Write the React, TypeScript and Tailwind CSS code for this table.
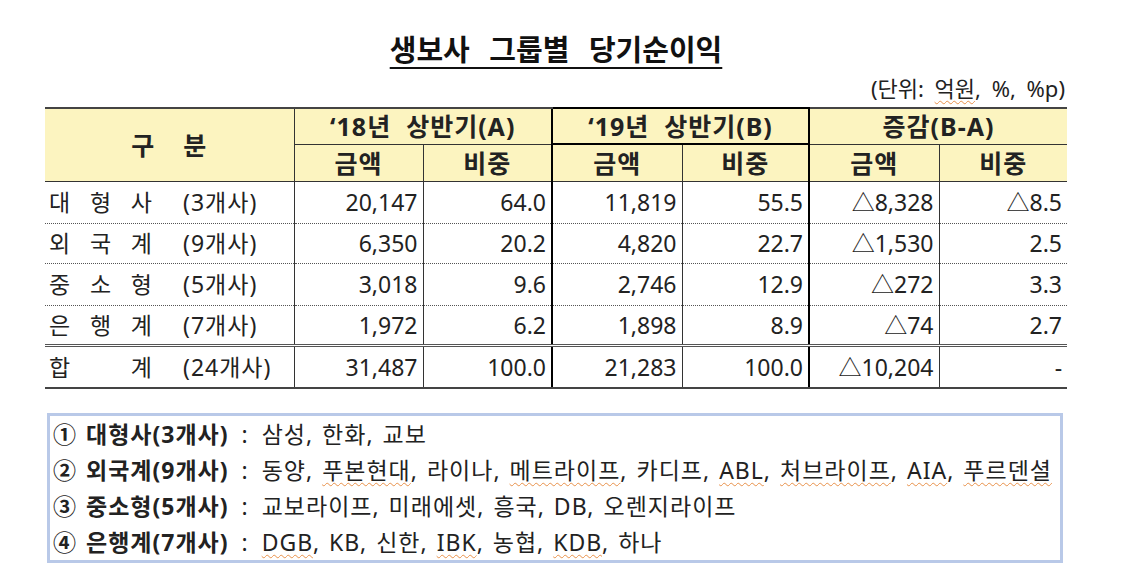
import React from "react";

type Row = {
  name: string[];
  count: string;
  a1: string;
  a2: string;
  b1: string;
  b2: string;
  d1: string;
  d2: string;
};

const rows: Row[] = [
  { name: ["대", "형", "사"], count: "(3개사)", a1: "20,147", a2: "64.0", b1: "11,819", b2: "55.5", d1: "△8,328", d2: "△8.5" },
  { name: ["외", "국", "계"], count: "(9개사)", a1: "6,350", a2: "20.2", b1: "4,820", b2: "22.7", d1: "△1,530", d2: "2.5" },
  { name: ["중", "소", "형"], count: "(5개사)", a1: "3,018", a2: "9.6", b1: "2,746", b2: "12.9", d1: "△272", d2: "3.3" },
  { name: ["은", "행", "계"], count: "(7개사)", a1: "1,972", a2: "6.2", b1: "1,898", b2: "8.9", d1: "△74", d2: "2.7" },
];

const total: Row = { name: ["합", "계"], count: "(24개사)", a1: "31,487", a2: "100.0", b1: "21,283", b2: "100.0", d1: "△10,204", d2: "-" };

const Sq = ({ children }: { children: React.ReactNode }) => (
  <span className="underline decoration-wavy decoration-[#e8914a] decoration-1 underline-offset-[3px]">
    {children}
  </span>
);

const notes: { label: string; items: React.ReactNode }[] = [
  { label: "① 대형사(3개사)", items: <>삼성, 한화, 교보</> },
  {
    label: "② 외국계(9개사)",
    items: (
      <>
        동양, <Sq>푸본현대</Sq>, 라이나, <Sq>메트라이프</Sq>, 카디프, <Sq>ABL</Sq>, <Sq>처브라이프</Sq>, <Sq>AIA</Sq>, <Sq>푸르덴셜</Sq>
      </>
    ),
  },
  { label: "③ 중소형(5개사)", items: <>교보라이프, 미래에셋, 흥국, DB, 오렌지라이프</> },
  {
    label: "④ 은행계(7개사)",
    items: (
      <>
        <Sq>DGB</Sq>, KB, 신한, <Sq>IBK</Sq>, 농협, <Sq>KDB</Sq>, 하나
      </>
    ),
  },
];

export default function App() {
  const font = "font-['Noto_Sans','Noto_Sans_CJK_KR',sans-serif]";
  const num = "text-right pr-[5px] py-0 text-[23px] text-[#222]";

  const bodyRow = (r: Row, i: number, isTotal: boolean) => {
    const rowBorder = isTotal
      ? "border-t-[3px] border-t-[#555] border-double border-b-2 border-b-[#444]"
      : "border-b border-dotted border-b-[#555]";
    const h = isTotal ? "h-[43px]" : i % 2 === 0 ? "h-[42px]" : "h-[40px]";
    return (
      <tr key={r.count} className={`${h} ${rowBorder}`}>
        <td className="pl-[4px] py-0 text-[23px] text-[#222]">
          <div className="flex items-center">
            <div className="flex w-[104px] justify-between tracking-[1px]">
              {r.name.map((c) => (
                <span key={c}>{c}</span>
              ))}
            </div>
            <span className="ml-[30px] tracking-[1px]">{r.count}</span>
          </div>
        </td>
        <td className={`${num} border-l border-l-[#333]`}>{r.a1}</td>
        <td className={`${num} border-l border-l-[#333]`}>{r.a2}</td>
        <td className={`${num} border-l-2 border-l-black ${isTotal ? "border-b-2 border-b-black" : ""}`}>{r.b1}</td>
        <td className={`${num} border-l border-l-[#333] border-r-2 border-r-black ${isTotal ? "border-b-2 border-b-black" : ""}`}>{r.b2}</td>
        <td className={`${num} border-l border-l-[#333]`}>{r.d1}</td>
        <td className={`${num} border-l border-l-[#333]`}>{r.d2}</td>
      </tr>
    );
  };

  const hd = "bg-[#fcf4c0] text-center py-0 font-bold text-[25px] tracking-[1px] text-[#222]";

  return (
    <div className={`w-[1131px] h-[573px] overflow-hidden bg-white ${font}`}>
      <div className="pl-[45px] w-[1067px]">
        <div className="mt-[30px] h-[40px] text-center leading-[40px]">
          <span className="text-[29px] font-bold text-[#111] underline decoration-2 underline-offset-[6px] [word-spacing:12px]">
            생보사 그룹별 당기순이익
          </span>
        </div>
        <div className="mt-[3px] h-[30px] text-right pr-[2px] leading-[30px] text-[22px] text-[#222] [word-spacing:5px]">
          (단위: <Sq>억원</Sq>, %, %p)
        </div>
        <table className="mt-[4px] w-[1022px] table-fixed border-collapse leading-[28px]">
          <colgroup>
            <col className="w-[249px]" />
            <col className="w-[129px]" />
            <col className="w-[129px]" />
            <col className="w-[130px]" />
            <col className="w-[127px]" />
            <col className="w-[130px]" />
            <col className="w-[128px]" />
          </colgroup>
          <thead>
            <tr className="h-[36px]">
              <th rowSpan={2} className={`${hd} border-t-2 border-t-[#444] border-b border-b-[#333]`}>
                <span className="inline-flex gap-[28px]">
                  <span>구</span>
                  <span>분</span>
                </span>
              </th>
              <th colSpan={2} className={`${hd} border-t-2 border-t-[#444] border-l border-l-[#333] border-b border-b-[#333]`}>
                ‘18년&nbsp; 상반기(A)
              </th>
              <th colSpan={2} className={`${hd} border-2 border-black`}>
                ‘19년&nbsp; 상반기(B)
              </th>
              <th colSpan={2} className={`${hd} border-t-2 border-t-[#444] border-l border-l-[#333] border-b border-b-[#333]`}>
                증감(B-A)
              </th>
            </tr>
            <tr className="h-[37px]">
              <th className={`${hd} border-l border-l-[#333] border-b border-b-[#333]`}>금액</th>
              <th className={`${hd} border-l border-l-[#333] border-b border-b-[#333]`}>비중</th>
              <th className={`${hd} border-l-2 border-l-black border-b border-b-[#333]`}>금액</th>
              <th className={`${hd} border-l border-l-[#333] border-r-2 border-r-black border-b border-b-[#333]`}>비중</th>
              <th className={`${hd} border-l border-l-[#333] border-b border-b-[#333]`}>금액</th>
              <th className={`${hd} border-l border-l-[#333] border-b border-b-[#333]`}>비중</th>
            </tr>
          </thead>
          <tbody>
            {rows.map((r, i) => bodyRow(r, i, false))}
            {bodyRow(total, 4, true)}
          </tbody>
        </table>
      </div>
      <div className="ml-[47px] mt-[24px] w-[1016px] border-[3px] border-[#b9c9e8] pl-[3px] text-[23px] leading-[36px] tracking-[1px] text-[#222] [word-spacing:2px]">
        {notes.map((n) => (
          <div key={n.label} className="whitespace-nowrap">
            <span className="font-bold">{n.label}</span>
            <span className="[word-spacing:6px]"> : </span>
            {n.items}
          </div>
        ))}
      </div>
    </div>
  );
}
